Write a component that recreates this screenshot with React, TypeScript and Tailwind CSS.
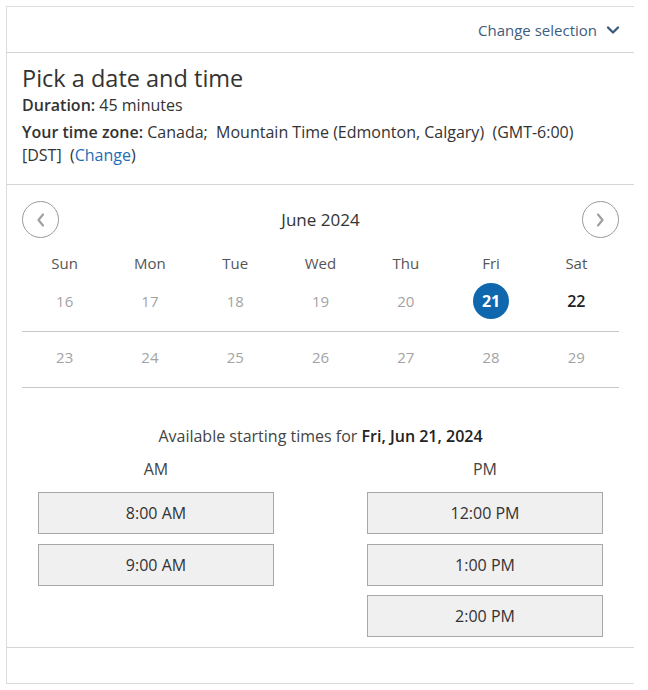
import React from "react";

const grey = "text-[#a3a3a3]";

function Chevron({ dir }: { dir: "left" | "right" }) {
  return (
    <svg width="12" height="16" viewBox="0 0 12 16" fill="none">
      {dir === "left" ? (
        <polyline points="8,2.5 3.5,8 8,13.5" stroke="#a0a0a0" strokeWidth="2.2" strokeLinecap="round" strokeLinejoin="round" />
      ) : (
        <polyline points="4,2.5 8.5,8 4,13.5" stroke="#a0a0a0" strokeWidth="2.2" strokeLinecap="round" strokeLinejoin="round" />
      )}
    </svg>
  );
}

export default function App() {
  const days = ["Sun", "Mon", "Tue", "Wed", "Thu", "Fri", "Sat"];
  const row1 = [16, 17, 18, 19, 20, 21, 22];
  const row2 = [23, 24, 25, 26, 27, 28, 29];
  const btn =
    "h-[42px] w-[236px] border border-[#a8a8a8] bg-[#f0f0f0] flex items-center justify-center text-[16px] text-[#333]";
  return (
    <div className="min-h-[690px] bg-white pt-[6px] pl-[6px]" style={{ fontFamily: '"Open Sans", "Noto Sans", sans-serif' }}>
      <div className="w-[628px] border-l border-t border-[#dcdcdc] text-[#333]">
        {/* header */}
        <div className="h-[46px] border-b border-[#d4d4d4] flex items-center justify-end pr-[14px]">
          <span className="text-[15px] text-[#3e5d7c] translate-y-[1px]">Change selection</span>
          <svg className="ml-[9px]" width="14" height="10" viewBox="0 0 14 10" fill="none">
            <polyline points="2,2.5 7,7.5 12,2.5" stroke="#3e5d7c" strokeWidth="2.4" strokeLinecap="round" strokeLinejoin="round" />
          </svg>
        </div>

        {/* title */}
        <div className="border-b border-[#d4d4d4] pl-[15px] pt-[9px] pb-[17px]">
          <h1 className="text-[23.5px] leading-[32px] text-[#333]">Pick a date and time</h1>
          <p className="text-[16px] leading-[22px]">
            <span className="font-semibold">Duration:</span> 45 minutes
          </p>
          <p className="mt-[5px] text-[16px] leading-[23px] w-[600px]">
            <span className="font-semibold">Your time zone:</span> Canada;&nbsp; Mountain Time (Edmonton, Calgary)&nbsp; (GMT-6:00)
            <br />
            [DST]&nbsp; (<span className="text-[#1f6db3]">Change</span>)
          </p>
        </div>

        {/* calendar */}
        <div className="px-[15px] pt-[16px]">
          <div className="flex items-center justify-between">
            <div className="h-[37px] w-[37px] rounded-full border border-[#9a9a9a] flex items-center justify-center">
              <Chevron dir="left" />
            </div>
            <div className="text-[17px] font-medium text-[#333]">June 2024</div>
            <div className="h-[37px] w-[37px] rounded-full border border-[#9a9a9a] flex items-center justify-center">
              <Chevron dir="right" />
            </div>
          </div>
          <div className="mt-[12px] grid grid-cols-7 h-[26px] items-center text-[15px] text-[#555]">
            {days.map((d) => (
              <div key={d} className="text-center">{d}</div>
            ))}
          </div>
          <div className="grid grid-cols-7 h-[56px] border-b border-[#c8c8c8]">
            {row1.map((d) => (
              <div key={d} className="flex justify-center pt-[7px]">
                {d === 21 ? (
                  <div className="h-[36px] w-[36px] rounded-full bg-[#0f67ad] text-white font-bold text-[16px] flex items-center justify-center">21</div>
                ) : d === 22 ? (
                  <div className="h-[36px] flex items-center text-[16px] font-semibold text-[#222]">22</div>
                ) : (
                  <div className={`h-[36px] flex items-center text-[15px] ${grey}`}>{d}</div>
                )}
              </div>
            ))}
          </div>
          <div className="grid grid-cols-7 h-[56px] border-b border-[#c8c8c8]">
            {row2.map((d) => (
              <div key={d} className="flex justify-center pt-[7px]">
                <div className={`h-[36px] flex items-center text-[15px] ${grey}`}>{d}</div>
              </div>
            ))}
          </div>
        </div>

        {/* times */}
        <div className="border-b border-[#d4d4d4] pb-[10px]">
          <p className="mt-[37px] text-center text-[16px] leading-[22px] text-[#444]">
            Available starting times for <span className="font-semibold text-[#222]">Fri, Jun 21, 2024</span>
          </p>
          <div className="mt-[11px] flex pl-[31px] gap-[93px]">
            <div className="flex flex-col gap-[10px]">
              <div className="text-center text-[16px] leading-[22px] text-[#444] mb-[2px]">AM</div>
              <div className={btn}>8:00 AM</div>
              <div className={btn}>9:00 AM</div>
            </div>
            <div className="flex flex-col gap-[10px]">
              <div className="text-center text-[16px] leading-[22px] text-[#444] mb-[2px]">PM</div>
              <div className={btn}>12:00 PM</div>
              <div className={btn}>1:00 PM</div>
              <div className={`${btn} -mt-[1px]`}>2:00 PM</div>
            </div>
          </div>
        </div>

        {/* footer */}
        <div className="h-[36px] border-b border-[#dcdcdc]" />
      </div>
    </div>
  );
}
